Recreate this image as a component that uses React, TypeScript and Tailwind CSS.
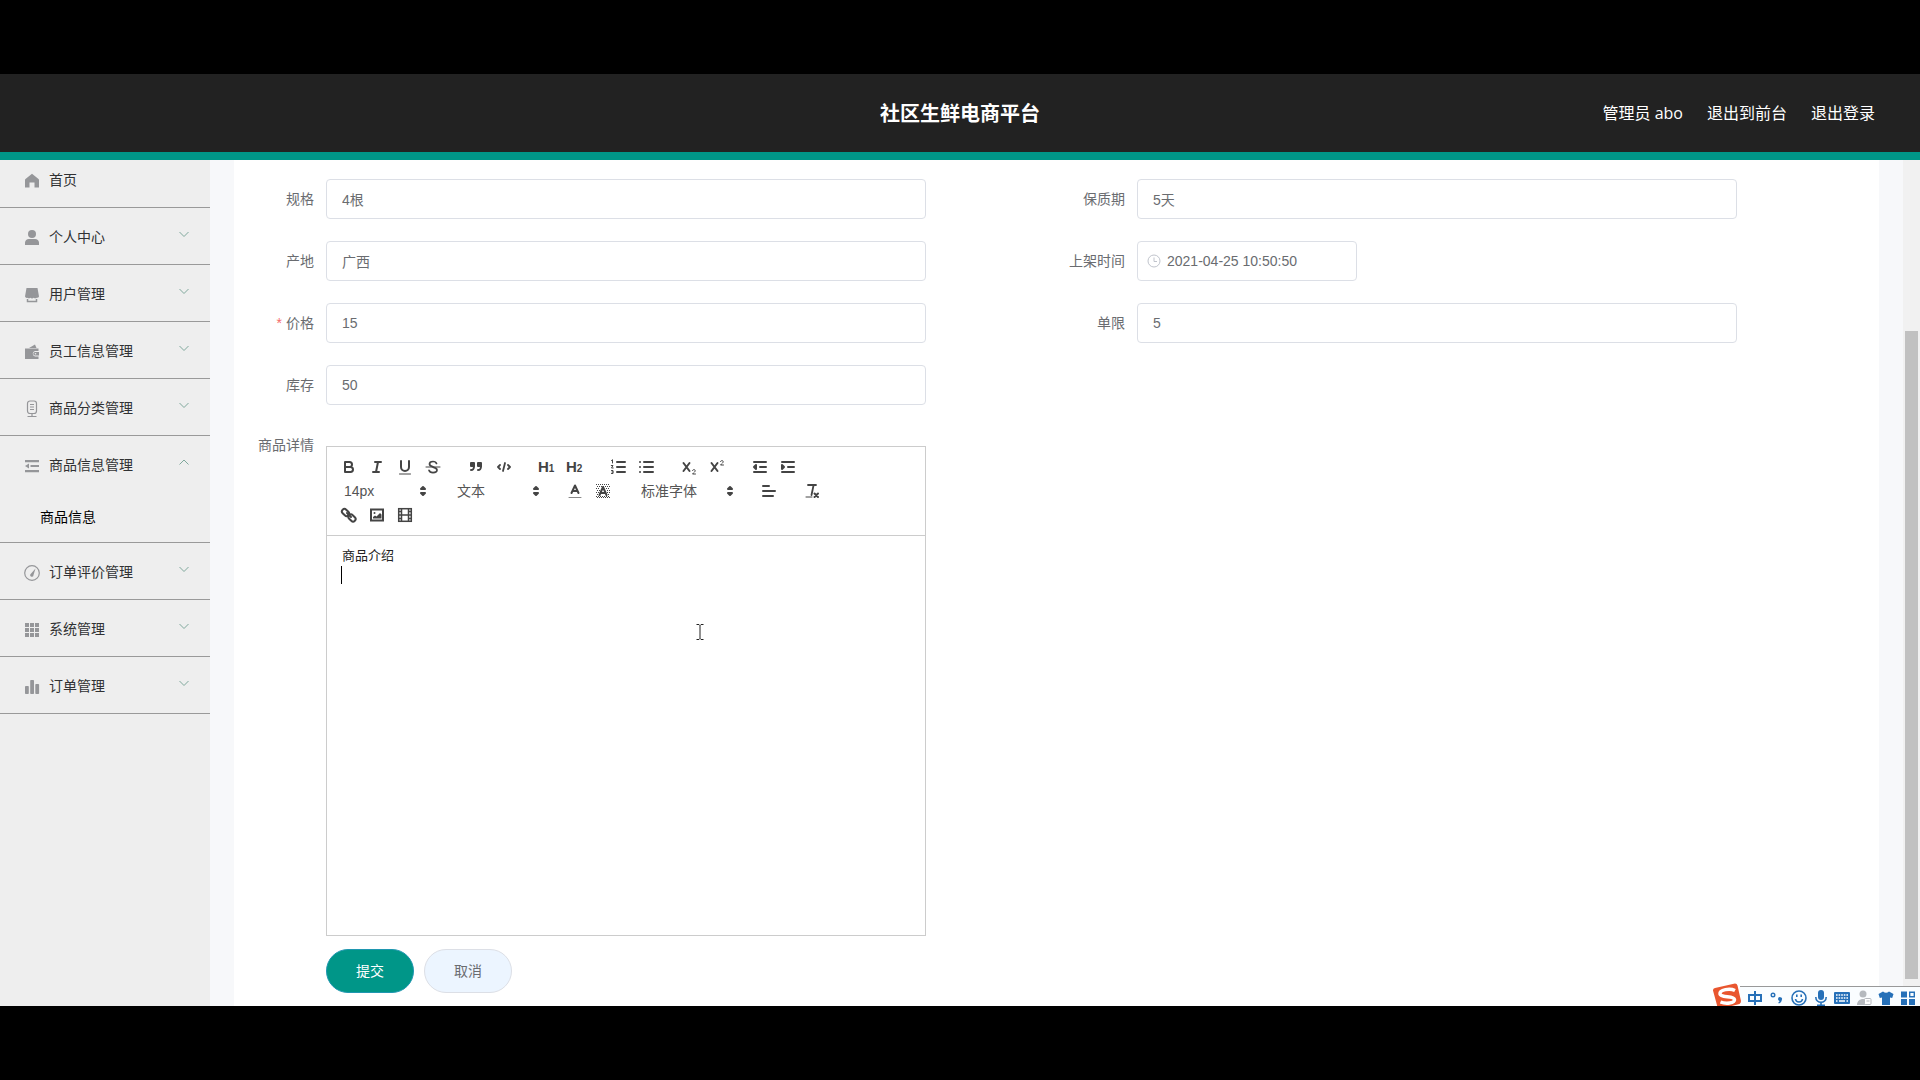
import type { ReactNode } from "react";

type MenuItem = { label: string; icon: ReactNode; open?: boolean; children?: string[] };

const menu: MenuItem[] = [
  {
    label: "个人中心",
    icon: (
      <>
        <circle cx="9" cy="5" r="4" />
        <path d="M2 16v-2.500a4 4 0 0 1 4-3.500h6a4 4 0 0 1 4 3.500V16z" />
      </>
    ),
  },
  {
    label: "用户管理",
    icon: (
      <>
        <path d="M3.500 2h11l1.500 8.500a2 2 0 0 1-2.300 1.300 2.500 2.500 0 0 1-3 0 2.500 2.500 0 0 1-3.300 0 2.500 2.500 0 0 1-3 0A2 2 0 0 1 2 10.500z" />
        <path d="M4.500 13v2.500h9V13" fill="none" stroke="currentColor" strokeWidth="1.500" />
      </>
    ),
  },
  {
    label: "员工信息管理",
    icon: (
      <>
        <path d="M6 5l6-3.500 1.500 3.500z" />
        <path fillRule="evenodd" d="M2 5.500h13.500V8H12a2.800 2.800 0 0 0 0 5.500h3.500V16H2z" />
        <path d="M12 9h4v3.500h-4a1.700 1.700 0 0 1 0-3.500z" />
        <circle cx="12.500" cy="10.700" r="0.800" fill="#eee" />
      </>
    ),
  },
  {
    label: "商品分类管理",
    icon: (
      <g fill="none" stroke="currentColor" strokeWidth="1.200">
        <rect x="4.500" y="1" width="9" height="12.500" rx="2.500" />
        <path d="M7 4.500h4M7 7h4M7 9.500h4M9 13.500v3M4.500 16.500h9" />
      </g>
    ),
  },
  {
    label: "商品信息管理",
    open: true,
    children: ["商品信息"],
    icon: (
      <>
        <path d="M2 3h14v2.200H2zM7.500 8h8.500v2H7.500zM2 13h14v2.200H2z" />
        <path d="M2 9l4-2.500v5z" />
      </>
    ),
  },
  {
    label: "订单评价管理",
    icon: (
      <>
        <circle cx="9" cy="9" r="7.300" fill="none" stroke="currentColor" strokeWidth="1.200" />
        <path d="M12.500 4.500L10.500 11a1.700 1.700 0 1 1-2.600-1.300z" />
      </>
    ),
  },
  {
    label: "系统管理",
    icon: (
      <path d="M2 2h4v4H2zM7 2h4v4H7zM12 2h4v4h-4zM2 7h4v4H2zM7 7h4v4H7zM12 7h4v4h-4zM2 12h4v4H2zM7 12h4v4H7zM12 12h4v4h-4z" />
    ),
  },
  {
    label: "订单管理",
    icon: (
      <>
        <rect x="2" y="8" width="3.800" height="8" rx="0.800" />
        <rect x="7.200" y="2" width="3.800" height="14" rx="0.800" />
        <rect x="12.300" y="6" width="3.800" height="10" rx="0.800" />
      </>
    ),
  },
];

function MenuIcon({ children }: { children: ReactNode }) {
  return (
    <svg viewBox="0 0 18 18" className="mx-[3px] mt-0.5 h-[18px] w-[18px] text-[#959699]" fill="currentColor">
      {children}
    </svg>
  );
}

function Sidebar() {
  return (
    <nav className="w-[210px] shrink-0 bg-[#eeeeee] text-sm text-[#303133]">
      <a href="#" className="flex h-12 items-center border-b border-[#999] pb-2 pl-5">
        <MenuIcon>
          <path d="M9 1.800L15.500 7a1.500 1.500 0 0 1 .5 1.200V15.500h-4.500V10.500h-5v5H2V8.200A1.500 1.500 0 0 1 2.500 7z" />
        </MenuIcon>
        <span className="ml-[5px]">首页</span>
      </a>
      {menu.map((item) => (
        <div key={item.label} className="border-b border-[#999]">
          <button type="button" aria-expanded={!!item.open} className="flex h-14 w-full items-center pt-0.5 pr-5 pl-5">
            <MenuIcon>{item.icon}</MenuIcon>
            <span className="ml-[5px]">{item.label}</span>
            <svg viewBox="0 0 12 12" className="mb-1.5 ml-auto h-3 w-3 text-[#7fa89c]" fill="none" stroke="currentColor">
              <path d={item.open ? "M1.500 8.500L6 4l4.500 4.500" : "M1.500 4L6 8.500 10.500 4"} />
            </svg>
          </button>
          {item.children?.map((child) => (
            <a key={child} href="#" className="flex h-[50px] items-center pl-10 text-black">
              {child}
            </a>
          ))}
        </div>
      ))}
    </nav>
  );
}

function Field({ id, label, value, required }: { id: string; label: string; value: string; required?: boolean }) {
  return (
    <div className="mb-[22px] flex">
      <label htmlFor={id} className="w-20 shrink-0 pr-3 text-right leading-10">
        {required && <span className="mr-1 text-[#f56c6c]">*</span>}
        {label}
      </label>
      <input
        id={id}
        defaultValue={value}
        className="h-10 w-[600px] rounded border border-[#dcdfe6] bg-white px-[15px] outline-none"
      />
    </div>
  );
}

function ToolButton({ title, children }: { title: string; children: ReactNode }) {
  return (
    <button type="button" title={title} className="h-6 w-7 px-[5px] py-[3px]">
      <svg
        viewBox="0 0 18 18"
        className="h-[18px] w-[18px] text-[#444]"
        fill="none"
        stroke="currentColor"
        strokeWidth="2"
        strokeLinecap="round"
        strokeLinejoin="round"
      >
        {children}
      </svg>
    </button>
  );
}

function Group({ children }: { children: ReactNode }) {
  return <div className="mr-[15px] flex">{children}</div>;
}

function Picker({ label, value, wide }: { label: string; value: string; wide?: boolean }) {
  return (
    <div className={wide ? "relative mr-[15px] h-6 w-[108px]" : "relative mr-[15px] h-6 w-[98px]"}>
      <select aria-label={label} className="h-6 w-full appearance-none bg-transparent pl-[9px] text-sm text-[#555] outline-none">
        <option>{value}</option>
      </select>
      <svg viewBox="0 0 18 18" className="pointer-events-none absolute top-[3px] right-px h-[18px] w-[18px] text-[#444]" fill="currentColor" stroke="currentColor" strokeWidth="2" strokeLinejoin="round">
        <polygon points="7 11 9 13 11 11 7 11" />
        <polygon points="7 7 9 5 11 7 7 7" />
      </svg>
    </div>
  );
}

function Toolbar() {
  return (
    <div className="flex flex-wrap border border-[#ccc] p-2">
      <Group>
        <ToolButton title="加粗">
          <path d="M5 4h4.500a2.500 2.500 0 0 1 0 5H5zM5 9h5.500a2.500 2.500 0 0 1 0 5H5z" />
        </ToolButton>
        <ToolButton title="斜体">
          <path d="M7 4h6M5 14h6M8 14l2-10" />
        </ToolButton>
        <ToolButton title="下划线">
          <path d="M5 3v6a4 4 0 0 0 8 0V3" />
          <path d="M3.500 16h11" strokeWidth="1" />
        </ToolButton>
        <ToolButton title="删除线">
          <path d="M2 9h14" strokeWidth="1" />
          <path d="M12.500 5.500C12 4 10.500 3.500 9 3.500 7 3.500 5.500 4.300 5.500 6c0 1.500 1.500 2.300 3.500 2.800M9 9.200c2.500.6 4 1.300 4 2.900 0 1.800-1.700 2.500-4 2.500-2 0-3.500-.7-4-2.300" strokeWidth="1.700" />
        </ToolButton>
      </Group>
      <Group>
        <ToolButton title="引用">
          <g fill="currentColor">
            <rect x="4" y="5" width="3" height="3" />
            <rect x="11" y="5" width="3" height="3" />
            <path d="M7 8c0 4-1.500 4-3 4M14 8c0 4-1.500 4-3 4" fill="none" />
          </g>
        </ToolButton>
        <ToolButton title="代码">
          <path d="M5 7L3 9l2 2M13 7l2 2-2 2M10 5l-2 8" strokeWidth="1.800" />
        </ToolButton>
      </Group>
      <Group>
        <button type="button" title="标题 1" className="h-6 w-7 text-left text-[15px] leading-6 font-bold text-[#444]">
          <span className="pl-[5px]">H</span>
          <span className="text-[10px]">1</span>
        </button>
        <button type="button" title="标题 2" className="h-6 w-7 text-left text-[15px] leading-6 font-bold text-[#444]">
          <span className="pl-[5px]">H</span>
          <span className="text-[10px]">2</span>
        </button>
      </Group>
      <Group>
        <ToolButton title="有序列表">
          <path d="M8 4h8M8 9h8M8 14h8" />
          <path d="M2.500 2.500l1-.8V5M2.300 7.500H4L2.500 10h1.700M2.500 12.500H4v3H2.500M3 14h1" strokeWidth="1" />
        </ToolButton>
        <ToolButton title="无序列表">
          <path d="M7 4h9M7 9h9M7 14h9M3 4h.01M3 9h.01M3 14h.01" />
        </ToolButton>
      </Group>
      <Group>
        <ToolButton title="下标">
          <path d="M3.500 5l6 8M9.500 5l-6 8" />
          <path d="M12.500 12.500c.3-1.300 2.700-1.300 2.700.2 0 1-1.400 1.900-2.700 3.300h3" strokeWidth="1" />
        </ToolButton>
        <ToolButton title="上标">
          <path d="M3.500 5l6 8M9.500 5l-6 8" />
          <path d="M12.500 3.500c.3-1.300 2.700-1.300 2.700.2 0 1-1.400 1.900-2.700 3.300h3" strokeWidth="1" />
        </ToolButton>
      </Group>
      <Group>
        <ToolButton title="减少缩进">
          <path d="M3 14h12M3 4h12M9 9h6" />
          <path d="M5 7v4L3 9z" fill="currentColor" />
        </ToolButton>
        <ToolButton title="增加缩进">
          <path d="M3 14h12M3 4h12M9 9h6" />
          <path d="M3 7v4l2-2z" fill="currentColor" />
        </ToolButton>
      </Group>
      <Picker label="字号" value="14px" />
      <Picker label="标题" value="文本" />
      <Group>
        <ToolButton title="文字颜色">
          <path d="M3 15.500h12" strokeWidth="1" stroke="#888" />
          <path d="M5.500 11L9 3.500 12.500 11M6.600 9h4.800" />
        </ToolButton>
        <ToolButton title="背景颜色">
          <g strokeWidth="1" strokeDasharray="1 1" strokeLinecap="butt">
            <path d="M2 2.500h14M3 4.500h13M2 6.500h4M12 6.500h4M3 8.500h3M13 8.500h3M2 10.500h3M13 10.500h3M3 12.500h2M14 12.500h2M2 14.500h14M3 15.500h13" />
          </g>
          <path d="M5.500 13L9 5l3.500 8M6.600 11h4.800" />
        </ToolButton>
      </Group>
      <Picker label="字体" value="标准字体" wide />
      <Group>
        <ToolButton title="对齐">
          <path d="M3 9h12M3 14h10M3 4h6" />
        </ToolButton>
      </Group>
      <Group>
        <ToolButton title="清除格式">
          <path d="M5 3h8M8.500 13l2-9.500" strokeWidth="1.800" />
          <path d="M3 15h6" strokeWidth="1" />
          <path d="M11.500 11.500l3.500 3.500M15 11.500L11.500 15" />
        </ToolButton>
      </Group>
      <Group>
        <ToolButton title="链接">
          <rect x="1.500" y="4" width="8" height="5" rx="2.500" transform="rotate(45 5.500 6.500)" />
          <rect x="8" y="9.500" width="8" height="5" rx="2.500" transform="rotate(45 12 12)" />
          <path d="M7 7l4 4" />
        </ToolButton>
        <ToolButton title="图片">
          <rect x="3" y="3.500" width="12" height="11" strokeLinejoin="miter" />
          <circle cx="6.500" cy="7" r="1" fill="currentColor" stroke="none" />
          <path d="M5 12.500V11l2-1.500 1.500 1L12 7l1.500 1.500v4z" fill="currentColor" stroke="none" />
        </ToolButton>
        <ToolButton title="视频">
          <g strokeWidth="1.500" strokeLinejoin="miter" strokeLinecap="butt">
            <rect x="2.700" y="2.700" width="12.600" height="12.600" />
            <path d="M5.500 3v12M12.500 3v12M5.500 9h7M3 5.500h2.500M3 9h2.500M3 12.500h2.500M12.500 5.500H15M12.500 9H15M12.500 12.500H15" />
          </g>
        </ToolButton>
      </Group>
    </div>
  );
}

function Editor() {
  return (
    <div className="flex">
      <label htmlFor="detail" className="-mt-0.5 w-20 shrink-0 pr-3 text-right leading-10">
        商品详情
      </label>
      <div className="mt-[19px] w-[600px]">
        <Toolbar />
        <div className="relative h-[400px] border border-t-0 border-[#ccc]">
          <textarea
            id="detail"
            defaultValue={"商品介绍\n"}
            className="block h-full w-full resize-none px-[15px] py-[11px] text-[13px] leading-[18px] text-[#222] outline-none"
          />
          <span className="absolute top-[30px] left-3.5 h-[18px] w-px bg-black" />
          {/* text pointer */}
          <svg viewBox="0 0 8 18" className="absolute top-[87px] left-[369px] h-[18px] w-2" fill="none" stroke="#222">
            <path d="M0.500 1.500h2.500l1 1 1-1h2.500M4 2.500v13M0.500 16.500h2.500l1-1 1 1h2.500" />
          </svg>
        </div>
      </div>
    </div>
  );
}

function InputMethodBar() {
  return (
    <div className="absolute right-0 bottom-0 flex h-5 w-[180px] items-center border-t border-[#999] bg-[#fafdff] text-[#2670b8]">
      <svg viewBox="0 0 30 26" className="absolute -top-1 -left-7 h-[26px] w-[30px]">
        <path d="M3 5L23 0.500q2 0 2.500 2L29 18q0 2-1.500 3L8 26q-2 0-2.500-2L1 7.500Q0.800 5.500 3 5z" fill="#e9562f" />
        <path d="M23 7.500C18 5 7.500 6.500 8 11c.5 4 14 1.500 14.500 5.500.4 4-9 4.500-14 2.500" fill="none" stroke="#fff" strokeWidth="3.500" />
      </svg>
      <div className="flex flex-1 items-center justify-between pt-0.5 pr-1 pl-[7px]">
        <svg viewBox="0 0 16 16" className="h-4 w-4" fill="none" stroke="currentColor" strokeWidth="2">
          <path d="M2 5h12v6H2zM8 1v14" />
        </svg>
        <svg viewBox="0 0 16 16" className="h-4 w-4" fill="currentColor">
          <circle cx="4" cy="5" r="1.800" fill="none" stroke="currentColor" strokeWidth="1.400" />
          <path d="M9 9a2 2 0 1 1 3.800 1c-.3 1.800-1.300 3-3 3.500l-.5-1c.8-.4 1.200-.9 1.300-1.500A2 2 0 0 1 9 9z" />
        </svg>
        <svg viewBox="0 0 16 16" className="h-4 w-4" fill="none" stroke="currentColor" strokeWidth="1.600">
          <circle cx="8" cy="8" r="7" />
          <path d="M4.500 9c.5 4 6.500 4 7 0M5.800 4.500v2.500M10.200 4.500v2.500" />
        </svg>
        <svg viewBox="0 0 16 16" className="h-4 w-4" fill="currentColor">
          <rect x="5" y="0" width="6" height="10" rx="3" />
          <path d="M2.800 7c0 7 10.400 7 10.400 0M8 12v3M4 15.300h8" fill="none" stroke="currentColor" strokeWidth="1.600" />
        </svg>
        <svg viewBox="0 0 16 16" className="h-4 w-4">
          <rect x="0" y="2" width="16" height="12" rx="1" fill="currentColor" />
          <path d="M2 5h12M2 8h12" stroke="#fff" strokeWidth="1.500" strokeDasharray="1.600 1" />
          <path d="M2 11h1.500M5 11h6M12.500 11H14" stroke="#fff" strokeWidth="1.500" />
        </svg>
        <svg viewBox="0 0 16 16" className="h-4 w-4 text-[#b5b9be]" fill="currentColor">
          <circle cx="7" cy="4" r="3.500" />
          <path d="M1 15c0-8 12-8 12 0z" />
          <rect x="8.500" y="8.500" width="6.500" height="6" rx="1" fill="#fff" stroke="currentColor" />
          <path d="M10.500 11h3" stroke="currentColor" />
        </svg>
        <svg viewBox="0 0 16 16" className="h-4 w-4" fill="currentColor">
          <path d="M5 1.500q3 2.500 6 0l4.500 2.500-1.300 4-2.200-.5V15H4V7.500L1.800 8 .5 4z" />
        </svg>
        <svg viewBox="0 0 16 16" className="h-4 w-4" fill="currentColor">
          <path d="M1 1.500h6v6H1zM1 9h6v6H1zM9 9h6v6H9z" />
          <path d="M9.700 2.200h4.600v4.600H9.700z" fill="none" stroke="currentColor" strokeWidth="1.400" />
        </svg>
      </div>
    </div>
  );
}

export default function App() {
  return (
    <div className="flex h-screen flex-col bg-black py-[74px] font-['Liberation_Sans','Noto_Sans_CJK_SC',sans-serif]">
      <header className="grid h-[86px] shrink-0 grid-cols-3 items-center border-b-8 border-[#009688] bg-[#222] font-['Open_Sans','Noto_Sans_CJK_SC',sans-serif] text-white">
        <h1 className="col-start-2 pt-px text-center text-xl font-bold">社区生鲜电商平台</h1>
        <div className="flex justify-end gap-6 pr-[45px] text-base">
          <span>管理员 abo</span>
          <a href="#">退出到前台</a>
          <a href="#">退出登录</a>
        </div>
      </header>

      <div className="relative flex min-h-0 flex-1 overflow-hidden bg-[#f7f8fa]">
        <Sidebar />
        <main className="mx-6 flex-1 bg-white pt-[19px] pr-[11px] pl-3 text-sm text-[#6a6c70]">
          <form>
            <div className="grid grid-cols-2">
              <Field id="spec" label="规格" value="4根" />
              <Field id="shelf-life" label="保质期" value="5天" />
              <Field id="origin" label="产地" value="广西" />
              <div className="mb-[22px] flex">
                <label htmlFor="listed-at" className="w-20 shrink-0 pr-3 text-right leading-10">
                  上架时间
                </label>
                <div className="relative">
                  <input
                    id="listed-at"
                    defaultValue="2021-04-25 10:50:50"
                    className="h-10 w-[220px] rounded border border-[#dcdfe6] bg-white pr-[15px] pl-[29px] outline-none"
                  />
                  <svg viewBox="0 0 14 14" className="absolute top-[13px] left-2.5 h-3.5 w-3.5 text-[#c0c4cc]" fill="none" stroke="currentColor">
                    <circle cx="7" cy="7" r="6" />
                    <path d="M7 3.500V7.500h3" />
                  </svg>
                </div>
              </div>
              <Field id="price" label="价格" value="15" required />
              <Field id="limit" label="单限" value="5" />
              <Field id="stock" label="库存" value="50" />
            </div>
            <Editor />
            <div className="mt-[13px] flex gap-2.5 pl-20">
              <button type="submit" className="h-11 w-[88px] rounded-[22px] border border-[#1f97b0] bg-[#009688] text-white">
                提交
              </button>
              <button type="button" className="h-11 w-[88px] rounded-[22px] border border-[#dcdfe6] bg-[#ecf5ff]">
                取消
              </button>
            </div>
          </form>
        </main>
        {/* page scrollbar */}
        <div className="w-[17px] shrink-0 bg-[#f1f1f1] px-0.5 pt-[171px]">
          <div className="h-[648px] bg-[#c1c1c1]" />
        </div>
        <InputMethodBar />
      </div>
    </div>
  );
}
